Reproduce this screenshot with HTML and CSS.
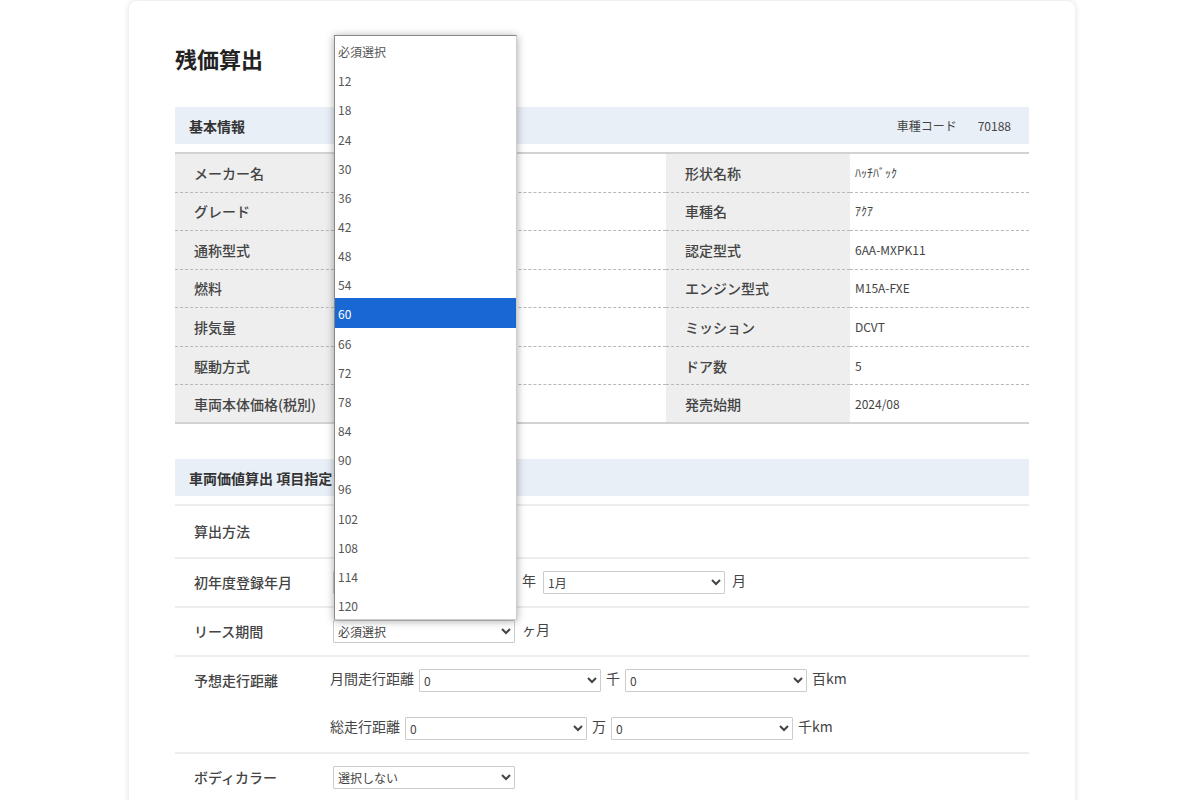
FILE: index.html
```html
<!DOCTYPE html>
<html lang="ja">
<head>
    <meta charset="UTF-8">
    <meta name="viewport" content="width=device-width, initial-scale=1.0">
    <title>残価算出</title>
    <link rel="stylesheet" href="styles.css">
</head>
<body>
    <main class="card">
        <h1>残価算出</h1>

        <!-- 基本情報 -->
        <section class="section">
            <div class="section-head">
                <h2>基本情報</h2>
                <p class="code"><span>車種コード</span><span>70188</span></p>
            </div>
            <table class="info">
                <tr><th scope="row">メーカー名</th><td></td><th scope="row">形状名称</th><td>ﾊｯﾁﾊﾞｯｸ</td></tr>
                <tr><th scope="row">グレード</th><td></td><th scope="row">車種名</th><td>ｱｸｱ</td></tr>
                <tr><th scope="row">通称型式</th><td></td><th scope="row">認定型式</th><td>6AA-MXPK11</td></tr>
                <tr><th scope="row">燃料</th><td></td><th scope="row">エンジン型式</th><td>M15A-FXE</td></tr>
                <tr><th scope="row">排気量</th><td></td><th scope="row">ミッション</th><td>DCVT</td></tr>
                <tr><th scope="row">駆動方式</th><td></td><th scope="row">ドア数</th><td>5</td></tr>
                <tr><th scope="row">車両本体価格(税別)</th><td></td><th scope="row">発売始期</th><td>2024/08</td></tr>
            </table>
        </section>

        <!-- 車両価値算出 -->
        <section class="section">
            <div class="section-head">
                <h2>車両価値算出 項目指定</h2>
            </div>
            <form class="form">
                <div class="row row-method">
                    <span class="row-label">算出方法</span>
                </div>
                <div class="row">
                    <label class="row-label" for="year">初年度登録年月</label>
                    <div class="fields">
                        <select id="year"><option></option></select>
                        <label for="year">年</label>
                        <select id="month"><option>1月</option></select>
                        <label for="month">月</label>
                    </div>
                </div>
                <div class="row">
                    <label class="row-label" for="lease">リース期間</label>
                    <div class="fields">
                        <div class="dropdown">
                            <select id="lease"><option>必須選択</option></select>
                            <ul class="menu" role="listbox" aria-label="リース期間">
                                <li role="option">必須選択</li>
                                <li role="option">12</li>
                                <li role="option">18</li>
                                <li role="option">24</li>
                                <li role="option">30</li>
                                <li role="option">36</li>
                                <li role="option">42</li>
                                <li role="option">48</li>
                                <li role="option">54</li>
                                <li role="option" class="active" aria-selected="true">60</li>
                                <li role="option">66</li>
                                <li role="option">72</li>
                                <li role="option">78</li>
                                <li role="option">84</li>
                                <li role="option">90</li>
                                <li role="option">96</li>
                                <li role="option">102</li>
                                <li role="option">108</li>
                                <li role="option">114</li>
                                <li role="option">120</li>
                            </ul>
                        </div>
                        <label for="lease">ヶ月</label>
                    </div>
                </div>
                <div class="row">
                    <span class="row-label">予想走行距離</span>
                    <div class="distance">
                        <div class="distance-line">
                            <label for="month-sen">月間走行距離</label>
                            <select id="month-sen"><option>0</option></select>
                            <label for="month-hyaku">千</label>
                            <select id="month-hyaku"><option>0</option></select>
                            <span>百km</span>
                        </div>
                        <div class="distance-line">
                            <label for="total-man">総走行距離</label>
                            <select id="total-man"><option>0</option></select>
                            <label for="total-sen">万</label>
                            <select id="total-sen"><option>0</option></select>
                            <span>千km</span>
                        </div>
                    </div>
                </div>
                <div class="row">
                    <label class="row-label" for="color">ボディカラー</label>
                    <div class="fields">
                        <select id="color"><option>選択しない</option></select>
                    </div>
                </div>
            </form>
        </section>
    </main>
</body>
</html>
```
FILE: styles.css
```css
* {
    box-sizing: border-box;
}
body {
    margin: 0;
    padding: 1px 0 0 4px;
    font-family: "Noto Sans CJK JP", sans-serif;
    font-size: 14px;
    color: #444;
    background: #fff;
}
.card {
    max-width: 946px;
    margin: 0 auto;
    padding: 41px 46px;
    background: #fff;
    border-radius: 8px;
    box-shadow: 0 0 6px rgba(0, 0, 0, 0.14);
}
h1 {
    margin: 0 0 33px;
    font-size: 22px;
    line-height: 32px;
    color: #222;
}
.section {
    margin-bottom: 35px;
}
.section-head {
    display: flex;
    justify-content: space-between;
    align-items: center;
    height: 37px;
    margin-bottom: 8px;
    padding: 0 18px 0 14px;
    background: #e9eff7;
}
h2 {
    margin: 0;
    font-size: 14px;
    line-height: 20px;
    color: #333;
}
.code {
    display: flex;
    gap: 21px;
    margin: 0;
    font-size: 12px;
}

/* info table */
.info {
    width: 100%;
    height: 272px;
    table-layout: fixed;
    border-spacing: 0;
    border-top: 2px solid #d2d2d2;
    border-bottom: 2px solid #d2d2d2;
}
.info th, .info td {
    padding: 0 5px;
    text-align: left;
    line-height: 20px;
    border-bottom: 1px dashed #b8b8b8;
}
.info th {
    width: 184px;
    padding-left: 19px;
    font-weight: 500;
    background: #eee;
}
.info td {
    font-size: 12px;
}
.info td:last-child {
    width: 179px;
}
.info tr:last-child th, .info tr:last-child td {
    border-bottom: none;
}

/* form rows */
.form {
    border-top: 2px solid #ededed;
}
.row {
    display: flex;
    padding: 12px 0;
    line-height: 22px;
    border-bottom: 2px solid #ededed;
}
.row:last-child {
    border-bottom: none;
}
.row-method {
    padding: 14px 0 15px;
}
.row-label {
    width: 155px;
    padding-left: 19px;
    font-weight: 500;
}
.fields {
    display: flex;
    gap: 7px;
    padding-left: 3px;
}
.distance {
    display: grid;
    gap: 25px;
}
.distance-line {
    display: flex;
    gap: 5px;
}
.fields > label, .distance-line > label, .distance-line > span {
    line-height: 18px;
}
select {
    display: block;
    width: 182px;
    height: 23px;
    padding: 0;
    font-family: inherit;
    font-size: 12px;
    color: #444;
    background: #fff;
    border: 1px solid #ccc;
    border-radius: 1px;
}

/* open list */
.dropdown {
    position: relative;
}
.menu {
    position: absolute;
    left: 1px;
    bottom: 100%;
    z-index: 10;
    display: flex;
    flex-direction: column;
    width: 183px;
    height: 585px;
    margin: 0;
    padding: 0;
    list-style: none;
    font-size: 12px;
    color: #555;
    background: #fff;
    border: 1px solid #ccc;
    border-top-color: #888;
    border-left-color: #888;
    box-shadow: 0 1px 8px rgba(0, 0, 0, 0.35);
}
.menu li {
    display: flex;
    flex: 1;
    align-items: center;
    padding: 3px 3px 0;
    line-height: 20px;
}
.menu .active {
    color: #fff;
    background: #1967d2;
}
```
